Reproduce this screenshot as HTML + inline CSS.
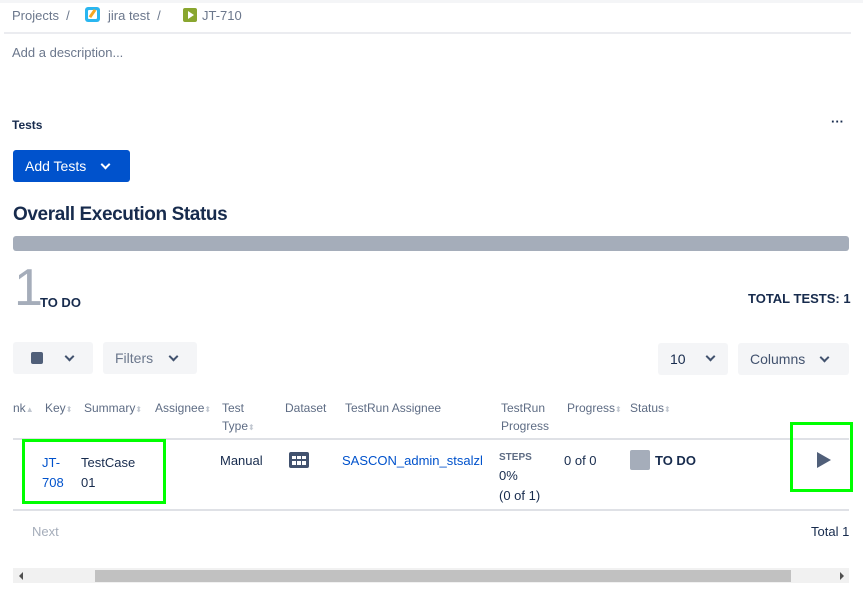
<!DOCTYPE html>
<html><head><style>
body{margin:0;width:863px;height:590px;background:#fff;font-family:"Liberation Sans",sans-serif;position:relative;overflow:hidden;color:#172b4d}
.a{position:absolute;white-space:nowrap}
.h{font-size:12px;color:#5e6c84;line-height:18px}
.s{font-size:13px}
.btn{position:absolute;background:#f4f5f7;border-radius:3px}
.chev{position:absolute;width:5px;height:5px;border-right:2px solid #42526e;border-bottom:2px solid #42526e;transform:rotate(45deg)}
.arr{color:#c1c7d0;font-size:8px}
</style></head><body>
<div class="a" style="left:0;top:0;width:863px;height:3px;background:#f4f5f7"></div>
<div class="a s" style="left:12px;top:8px;color:#6b778c">Projects&nbsp;&nbsp;/</div>
<div class="a" style="left:85px;top:7px;width:15px;height:15px;background:#2ab6f0;border-radius:3px"><div style="margin:3px;width:9px;height:9px;background:#fff;border-radius:1px"></div></div>
<div class="a" style="left:91px;top:9px;width:3px;height:9px;background:#f5a623;transform:rotate(35deg)"></div>
<div class="a s" style="left:108px;top:8px;color:#6b778c">jira test&nbsp;&nbsp;/</div>
<div class="a" style="left:183px;top:8px;width:14px;height:14px;background:#89a62f;border-radius:2px"></div>
<div class="a" style="left:188px;top:11px;border-left:6px solid #fff;border-top:4px solid transparent;border-bottom:4px solid transparent"></div>
<div class="a s" style="left:202px;top:8px;color:#6b778c">JT-710</div>
<div class="a" style="left:4px;top:32px;width:847px;height:2px;background:#ebecf0"></div>
<div class="a s" style="left:12px;top:45px;color:#6b778c">Add a description...</div>
<div class="a" style="left:12px;top:118px;font-size:12px;font-weight:bold">Tests</div>
<div class="a" style="left:831px;top:114px;font-weight:bold;font-size:13px">···</div>
<div class="a" style="left:13px;top:150px;width:117px;height:32px;background:#0052cc;border-radius:3px"></div>
<div class="a" style="left:25px;top:158px;color:#fff;font-size:14px">Add Tests</div>
<div class="chev" style="left:102px;top:161px;border-color:#fff"></div>
<div class="a" style="left:13px;top:204px;font-size:19px;font-weight:bold;letter-spacing:-0.4px">Overall Execution Status</div>
<div class="a" style="left:13px;top:236px;width:836px;height:15px;background:#a5adba;border-radius:3px"></div>
<div class="a" style="left:14px;top:262px;font-size:52px;color:#a5adba;line-height:52px">1</div>
<div class="a" style="left:40px;top:295px;font-size:13px;font-weight:bold">TO DO</div>
<div class="a" style="left:748px;top:291px;font-size:13px;font-weight:bold">TOTAL TESTS: 1</div>
<div class="btn" style="left:13px;top:342px;width:80px;height:32px"></div>
<div class="a" style="left:31px;top:352px;width:12px;height:12px;background:#505f79;border-radius:2px"></div>
<div class="chev" style="left:66px;top:353px"></div>
<div class="btn" style="left:103px;top:342px;width:94px;height:32px"></div>
<div class="a" style="left:115px;top:350px;font-size:14px;color:#6b778c">Filters</div>
<div class="chev" style="left:170px;top:353px"></div>
<div class="btn" style="left:658px;top:343px;width:70px;height:32px"></div>
<div class="a" style="left:670px;top:351px;font-size:14px">10</div>
<div class="chev" style="left:707px;top:353px"></div>
<div class="btn" style="left:738px;top:343px;width:111px;height:32px"></div>
<div class="a" style="left:750px;top:351px;font-size:14px;color:#42526e">Columns</div>
<div class="chev" style="left:821px;top:354px"></div>
<div class="a h" style="left:13px;top:399px">nk<span class="arr">▲</span></div>
<div class="a h" style="left:45px;top:399px">Key<span class="arr">⬍</span></div>
<div class="a h" style="left:84px;top:399px">Summary<span class="arr">⬍</span></div>
<div class="a h" style="left:155px;top:399px">Assignee<span class="arr">⬍</span></div>
<div class="a h" style="left:222px;top:399px">Test<br>Type<span class="arr">⬍</span></div>
<div class="a h" style="left:285px;top:399px">Dataset</div>
<div class="a h" style="left:345px;top:399px">TestRun Assignee</div>
<div class="a h" style="left:501px;top:399px">TestRun<br>Progress</div>
<div class="a h" style="left:567px;top:399px">Progress<span class="arr">⬍</span></div>
<div class="a h" style="left:630px;top:399px">Status<span class="arr">⬍</span></div>
<div class="a" style="left:13px;top:438px;width:836px;height:2px;background:#dfe1e6"></div>
<div class="a" style="left:13px;top:509px;width:836px;height:2px;background:#dfe1e6"></div>
<div class="a" style="left:22px;top:439px;width:138px;height:59px;border:3px solid #00ff00"></div>
<div class="a s" style="left:42px;top:453px;line-height:20px;color:#0052cc">JT-<br>708</div>
<div class="a s" style="left:81px;top:453px;line-height:20px">TestCase<br>01</div>
<div class="a s" style="left:220px;top:453px">Manual</div>
<svg class="a" style="left:289px;top:452px" width="20" height="16" viewBox="0 0 20 16"><rect width="20" height="16" rx="2" fill="#42526e"/><g fill="#fff"><rect x="3" y="4" width="4" height="3"/><rect x="8" y="4" width="4" height="3"/><rect x="13" y="4" width="4" height="3"/><rect x="3" y="9" width="4" height="4"/><rect x="8" y="9" width="4" height="4"/><rect x="13" y="9" width="4" height="4"/></g></svg>
<div class="a s" style="left:342px;top:453px;color:#0052cc">SASCON_admin_stsalzl</div>
<div class="a" style="left:499px;top:452px;font-size:10px;font-weight:bold;color:#5e6c84">STEPS</div>
<div class="a s" style="left:499px;top:466px;line-height:20px">0%<br>(0 of 1)</div>
<div class="a s" style="left:564px;top:453px">0 of 0</div>
<div class="a" style="left:630px;top:450px;width:20px;height:20px;background:#a5adba;border-radius:2px"></div>
<div class="a" style="left:655px;top:453px;font-size:13px;font-weight:bold">TO DO</div>
<div class="a" style="left:790px;top:422px;width:57px;height:64px;border:3px solid #00ff00"></div>
<div class="a" style="left:817px;top:452px;border-left:14px solid #505f79;border-top:8px solid transparent;border-bottom:8px solid transparent"></div>
<div class="a s" style="left:32px;top:524px;color:#a5adba">Next</div>
<div class="a s" style="left:811px;top:524px">Total 1</div>
<div class="a" style="left:13px;top:568px;width:836px;height:15px;background:#f1f1f1"></div>
<div class="a" style="left:95px;top:570px;width:696px;height:12px;background:#c1c1c1"></div>
<div class="a" style="left:19px;top:572px;border-right:4px solid #505050;border-top:4px solid transparent;border-bottom:4px solid transparent"></div>
<div class="a" style="left:840px;top:572px;border-left:4px solid #505050;border-top:4px solid transparent;border-bottom:4px solid transparent"></div>
</body></html>
